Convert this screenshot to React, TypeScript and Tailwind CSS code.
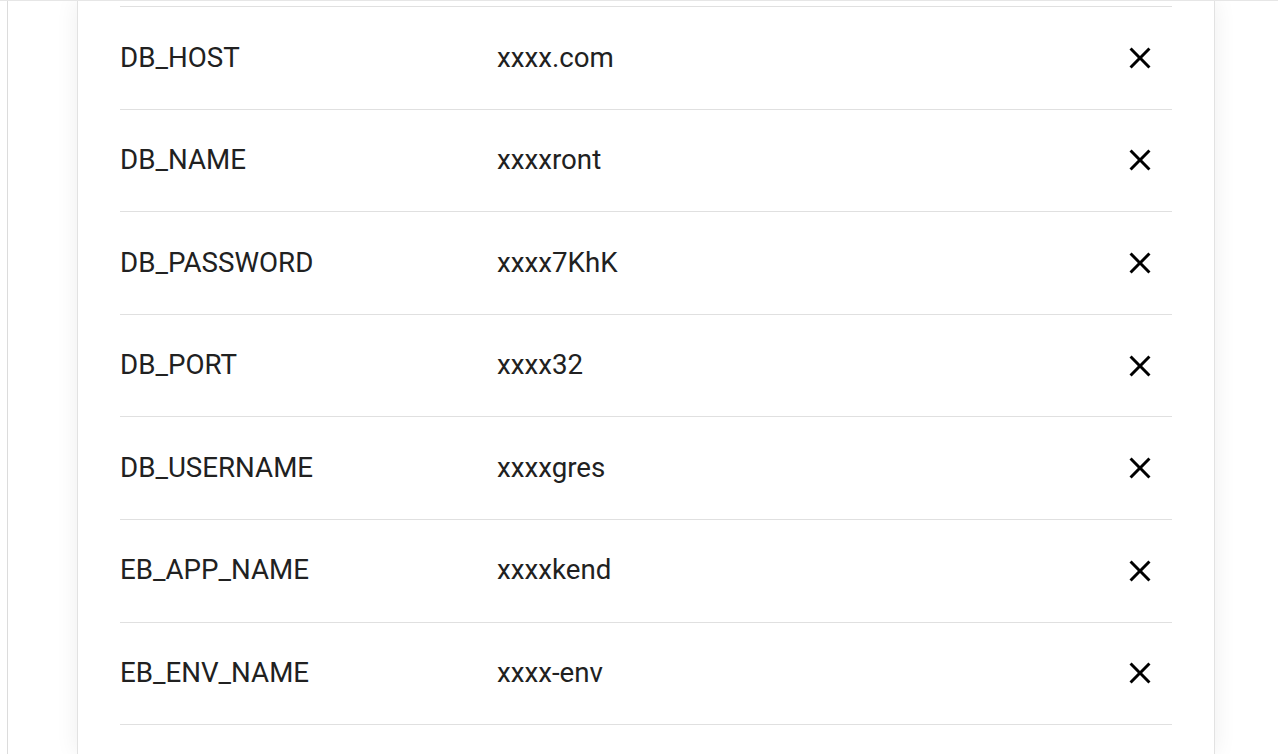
const envVars = [
  { key: 'DB_HOST', value: 'xxxx.com' },
  { key: 'DB_NAME', value: 'xxxxront' },
  { key: 'DB_PASSWORD', value: 'xxxx7KhK' },
  { key: 'DB_PORT', value: 'xxxx32' },
  { key: 'DB_USERNAME', value: 'xxxxgres' },
  { key: 'EB_APP_NAME', value: 'xxxxkend' },
  { key: 'EB_ENV_NAME', value: 'xxxx-env' },
]

function CloseIcon() {
  return (
    <svg width="36" height="36" viewBox="0 0 24 24" fill="currentColor">
      <path d="M19 6.41L17.59 5 12 10.59 6.41 5 5 6.41 10.59 12 5 17.59 6.41 19 12 13.41 17.59 19 19 17.59 13.41 12z" />
    </svg>
  )
}

export default function App() {
  return (
    <div
      className="h-[754px] w-full overflow-hidden bg-white border-t border-[#e6e6e6] flex"
      style={{ fontFamily: 'Roboto, "Liberation Sans", sans-serif' }}
    >
      {/* left rail */}
      <div className="w-[8px] flex-shrink-0 border-r border-[#dcdcdc]" />

      <div className="flex-1 pl-[69px] pr-[63px]">
        <div className="h-full bg-white border-x border-[#e2e2e2] shadow-[0_0_22px_rgba(0,0,0,0.07)] px-[42px] pt-[5px]">
          <div className="border-t border-[#e0e0e0]">
            {envVars.map((v) => (
              <div
                key={v.key}
                className="h-[102.6px] border-b border-[#e0e0e0] grid grid-cols-[377px_1fr_auto] items-center text-[27.7px] text-[#212121]"
              >
                <span className="-mt-[1px]">{v.key}</span>
                <span className="-mt-[1px]">{v.value}</span>
                <button className="mr-[14px] text-black flex items-center justify-center">
                  <CloseIcon />
                </button>
              </div>
            ))}
          </div>
        </div>
      </div>
    </div>
  )
}
